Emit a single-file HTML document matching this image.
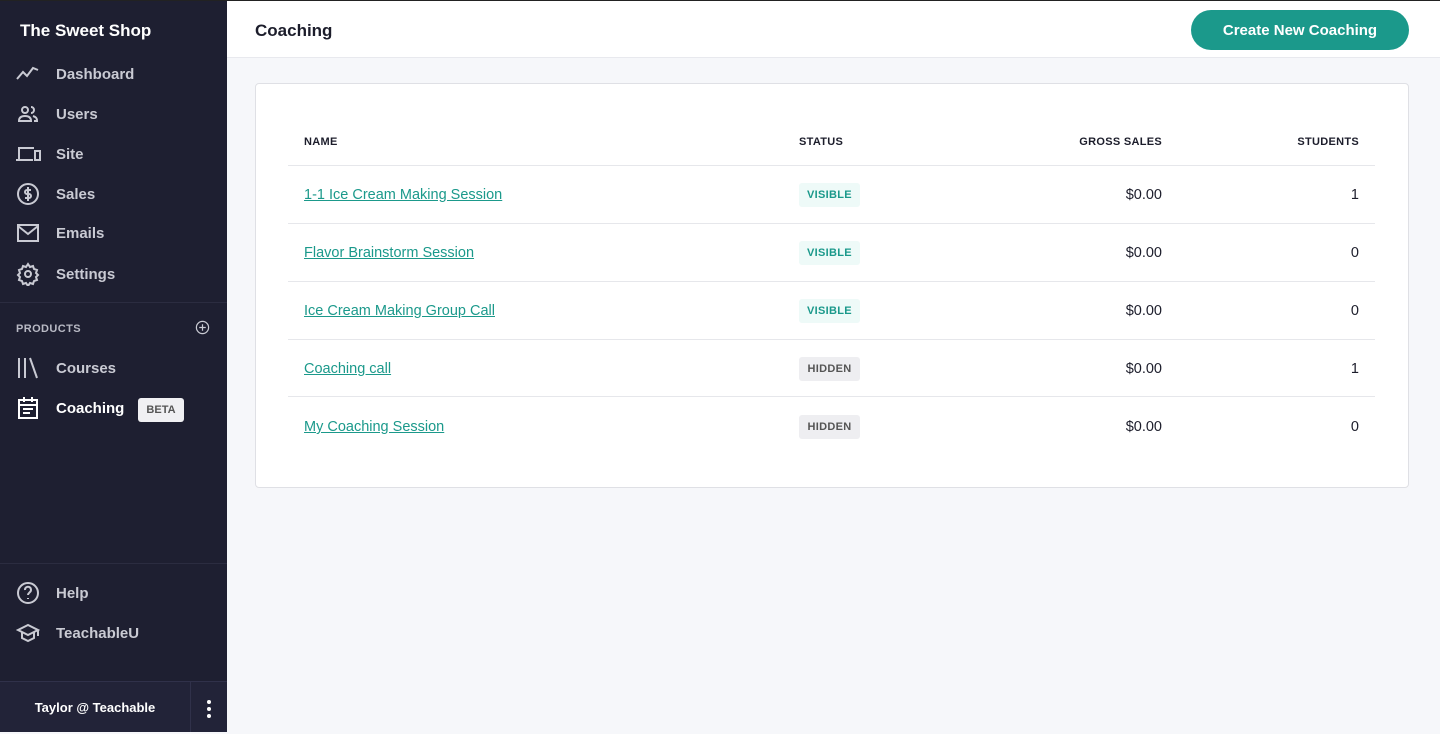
<!DOCTYPE html>
<html><head><style>
*{box-sizing:border-box;margin:0;padding:0}
body{width:1440px;height:732px;overflow:hidden;font-family:"Liberation Sans",sans-serif;background:#f6f7fa;position:relative}
.top{position:absolute;left:0;top:0;width:1440px;height:1px;background:#222}
.sb{position:absolute;left:0;top:1px;width:227px;height:731px;background:#1e1f31;color:#c9cad3}
.brand{position:absolute;left:20px;top:20px;font-size:17px;font-weight:bold;color:#fff}
.nav{position:absolute;left:0;width:227px;height:40px;display:flex;align-items:center;font-size:15px;font-weight:bold}
.nav svg{position:absolute;left:16px}
.nav span{position:absolute;left:56px;top:12px}
.sep{position:absolute;left:0;width:227px;height:1px;background:#2b2c40}
.prod{position:absolute;left:16px;top:322px;font-size:11px;font-weight:bold;letter-spacing:.4px;color:#b8b9c4}
.beta{position:absolute;left:138px;top:397px;width:46px;height:24px;background:#f0f0f3;color:#555;font-size:11px;font-weight:bold;border-radius:3px;text-align:center;line-height:24px}
.foot{position:absolute;left:0;top:681px;width:227px;height:51px;background:#222338;border-top:1px solid #30314a}
.foot .n{position:absolute;left:0;width:191px;top:0;height:50px;line-height:52px;text-align:center;color:#fff;font-size:13px;font-weight:bold;border-right:1px solid #30314a}
.hdr{position:absolute;left:227px;top:1px;width:1213px;height:57px;background:#fff;border-bottom:1px solid #e8e9ee}
.hdr h1{position:absolute;left:28px;top:20px;font-size:17px;font-weight:bold;color:#1c1d2b}
.btn{position:absolute;left:964px;top:9px;width:218px;height:40px;border-radius:20px;background:#1b998b;color:#fff;font-weight:bold;font-size:15px;text-align:center;line-height:42px}
.card{position:absolute;left:255px;top:83px;width:1154px;height:405px;background:#fff;border:1px solid #dfe0e5;border-radius:4px}
.th{position:absolute;top:136px;font-size:11px;font-weight:bold;color:#1c1d2b;letter-spacing:.3px}
.hl{position:absolute;left:288px;width:1087px;height:1px;background:#e6e7eb}
.row{position:absolute;left:0;width:1440px;height:58px}
.row a{position:absolute;left:304px;top:21px;font-size:14.5px;color:#1b998b;text-decoration:underline}
.bd{position:absolute;left:799px;top:17px;width:61px;height:24px;border-radius:3px;font-size:11px;font-weight:bold;line-height:24px;text-align:center;letter-spacing:.3px}
.v{background:#eefaf8;color:#1b998b}.h{background:#eeeef1;color:#555}
.gs{position:absolute;right:278px;top:21px;font-size:14.5px;color:#1c1d2b}
.st{position:absolute;right:81px;top:21px;font-size:14.5px;color:#1c1d2b}
</style></head><body>
<div class="top"></div>
<div class="sb">
<div class="brand">The Sweet Shop</div>
<div class="nav" style="top:53px"><svg width="24" height="24" viewBox="0 0 24 24" fill="none" stroke="#c9cad3" stroke-width="2"><path d="M1 17l6-7 4 4 6-8 5 2"/></svg><span>Dashboard</span></div>
<div class="nav" style="top:93px"><svg width="24" height="24" viewBox="0 0 24 24" fill="none" stroke="#c9cad3" stroke-width="2"><circle cx="9" cy="8" r="3"/><path d="M3 19c0-4 3-5 6-5s6 1 6 5zM15 5a3 3 0 010 6M17 14c3 1 4 2 4 5h-3"/></svg><span>Users</span></div>
<div class="nav" style="top:133px"><svg width="26" height="24" viewBox="0 0 26 24" fill="none" stroke="#c9cad3" stroke-width="2"><path d="M3 17V6h15M0 18h17"/><rect x="19" y="9" width="5" height="9"/></svg><span>Site</span></div>
<div class="nav" style="top:173px"><svg width="24" height="24" viewBox="0 0 24 24" fill="none" stroke="#c9cad3" stroke-width="2"><circle cx="12" cy="12" r="10"/><path d="M15 8h-4a2 2 0 000 4h2a2 2 0 010 4H9M12 5v14"/></svg><span>Sales</span></div>
<div class="nav" style="top:212px"><svg width="24" height="24" viewBox="0 0 24 24" fill="none" stroke="#c9cad3" stroke-width="2"><rect x="2" y="4" width="20" height="16"/><path d="M2 5l10 8 10-8"/></svg><span>Emails</span></div>
<div class="nav" style="top:253px"><svg width="24" height="24" viewBox="0 0 24 24" fill="none" stroke="#c9cad3" stroke-width="2"><circle cx="12" cy="12" r="3"/><path d="M12 2l2 3 3-1 1 3 3 1-1 3 2 2-2 2 1 3-3 1-1 3-3-1-2 3-2-3-3 1-1-3-3-1 1-3-2-2 2-2-1-3 3-1 1-3 3 1z"/></svg><span>Settings</span></div>
<div class="sep" style="top:301px"></div>
<div class="prod">PRODUCTS</div>
<svg style="position:absolute;left:195px;top:319px" width="15" height="15" viewBox="0 0 16 16" fill="none" stroke="#c9cad3" stroke-width="1.3"><circle cx="8" cy="8" r="6.5"/><path d="M8 4.5v7M4.5 8h7"/></svg>
<div class="nav" style="top:347px"><svg width="24" height="24" viewBox="0 0 24 24" fill="none" stroke="#c9cad3" stroke-width="2"><path d="M3 2v20M9 2v20M14 2l7 20"/></svg><span>Courses</span></div>
<div class="nav" style="top:387px;color:#fff"><svg width="24" height="24" viewBox="0 0 24 24" fill="none" stroke="#fff" stroke-width="2"><rect x="3" y="4" width="18" height="18"/><path d="M3 9h18M8 1v5M16 1v5M7 13h10M7 17h7"/></svg><span>Coaching</span></div>
<div class="beta">BETA</div>
<div class="sep" style="top:562px"></div>
<div class="nav" style="top:572px"><svg width="24" height="24" viewBox="0 0 24 24" fill="none" stroke="#c9cad3" stroke-width="2"><circle cx="12" cy="12" r="10"/><path d="M9 9a3 3 0 115 2c-1 1-2 1.5-2 3M12 17v1"/></svg><span>Help</span></div>
<div class="nav" style="top:612px"><svg width="24" height="24" viewBox="0 0 24 24" fill="none" stroke="#c9cad3" stroke-width="2"><path d="M2 9l10-5 10 5-10 5zM6 11v6l6 3 6-3v-6M22 9v6"/></svg><span>TeachableU</span></div>
<div class="foot" style="top:680px"><div class="n">Taylor @ Teachable</div>
<svg style="position:absolute;left:205px;top:17px" width="8" height="20"><circle cx="4" cy="3" r="2" fill="#fff"/><circle cx="4" cy="10" r="2" fill="#fff"/><circle cx="4" cy="17" r="2" fill="#fff"/></svg></div>
</div>
<div class="hdr"><h1>Coaching</h1><div class="btn">Create New Coaching</div></div>
<div class="card"></div>
<div class="th" style="left:304px">NAME</div>
<div class="th" style="left:799px">STATUS</div>
<div class="th" style="right:278px">GROSS SALES</div>
<div class="th" style="right:81px">STUDENTS</div>
<div class="hl" style="top:165px"></div>
<div class="row" style="top:166px"><a>1-1 Ice Cream Making Session</a><div class="bd v">VISIBLE</div><div class="gs">$0.00</div><div class="st">1</div></div>
<div class="hl" style="top:223px"></div>
<div class="row" style="top:224px"><a>Flavor Brainstorm Session</a><div class="bd v">VISIBLE</div><div class="gs">$0.00</div><div class="st">0</div></div>
<div class="hl" style="top:281px"></div>
<div class="row" style="top:282px"><a>Ice Cream Making Group Call</a><div class="bd v">VISIBLE</div><div class="gs">$0.00</div><div class="st">0</div></div>
<div class="hl" style="top:339px"></div>
<div class="row" style="top:340px"><a>Coaching call</a><div class="bd h">HIDDEN</div><div class="gs">$0.00</div><div class="st">1</div></div>
<div class="hl" style="top:396px"></div>
<div class="row" style="top:398px"><a>My Coaching Session</a><div class="bd h">HIDDEN</div><div class="gs">$0.00</div><div class="st">0</div></div>
</body></html>
